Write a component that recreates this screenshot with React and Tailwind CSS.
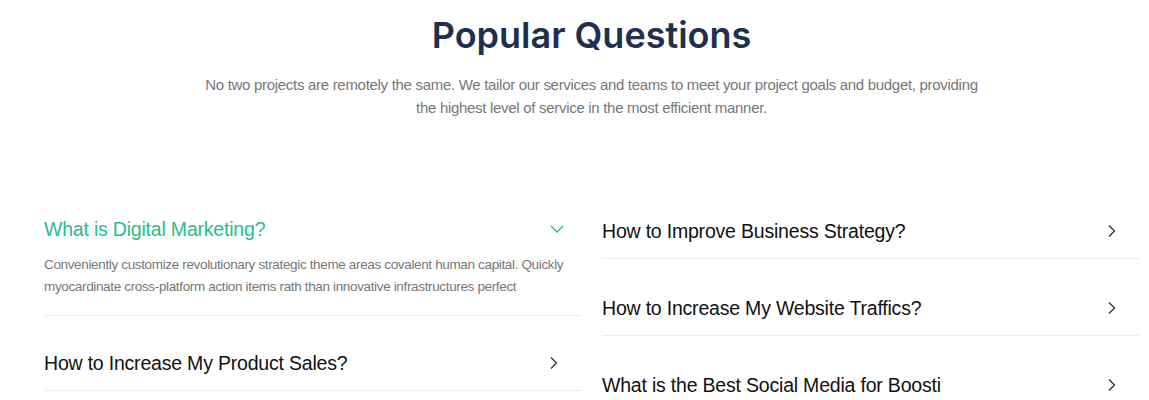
import React from "react";

const Chevron = () => (
  <svg width="14" height="14" viewBox="0 0 14 14" fill="none" className="shrink-0">
    <path d="M4 1.5 L9.5 7 L4 12.5" stroke="#333" strokeWidth="1.3" />
  </svg>
);

const ChevronDown = () => (
  <svg width="14" height="10" viewBox="0 0 14 10" fill="none" className="shrink-0">
    <path d="M1 2 L7 8 L13 2" stroke="#1fc08e" strokeWidth="1.3" />
  </svg>
);

function Item({ q, pt = "pt-[35px]" }) {
  return (
    <div className={`border-b border-[#ececec] ${pt} pb-[13px] flex items-center justify-between pr-[20px]`}>
      <span className="text-[19.5px] leading-[28px] tracking-[-0.2px] text-[#111]">{q}</span>
      <Chevron />
    </div>
  );
}

export default function App() {
  return (
    <div className="bg-white h-[400px] overflow-hidden font-['Liberation_Sans',Arial,sans-serif]">
      <div className="ml-[44px] w-[1095px]">
        <div className="flex flex-col items-center pt-[13px]">
          <h2 className="font-['Inter',sans-serif] font-semibold text-[36px] leading-[44px] text-[#1e2f4f]">
            Popular Questions
          </h2>
          <p className="mt-[16px] w-[790px] text-center text-[15px] leading-[23px] tracking-[-0.3px] text-[#777]">
            No two projects are remotely the same. We tailor our services and teams to meet your project goals and budget, providing the highest level of service in the most efficient manner.
          </p>
        </div>
        <div className="mt-[63px] grid grid-cols-2 gap-x-[21px]">
          <div>
            <div className="border-b border-[#ececec] pt-[33px] pb-[17px]">
              <div className="flex items-center justify-between pr-[17px]">
                <span className="text-[19.5px] leading-[28px] tracking-[-0.2px] text-[#1fc08e]">What is Digital Marketing?</span>
                <ChevronDown />
              </div>
              <p className="mt-[11px] text-[13.5px] leading-[22px] tracking-[-0.35px] text-[#777] pr-[10px]">
                Conveniently customize revolutionary strategic theme areas covalent human capital. Quickly myocardinate cross-platform action items rath than innovative infrastructures perfect
              </p>
            </div>
            <Item q="How to Increase My Product Sales?" pt="pt-[33px]" />
          </div>
          <div>
            <Item q="How to Improve Business Strategy?" />
            <Item q="How to Increase My Website Traffics?" />
            <Item q="What is the Best Social Media for Boosti" />
          </div>
        </div>
      </div>
    </div>
  );
}
